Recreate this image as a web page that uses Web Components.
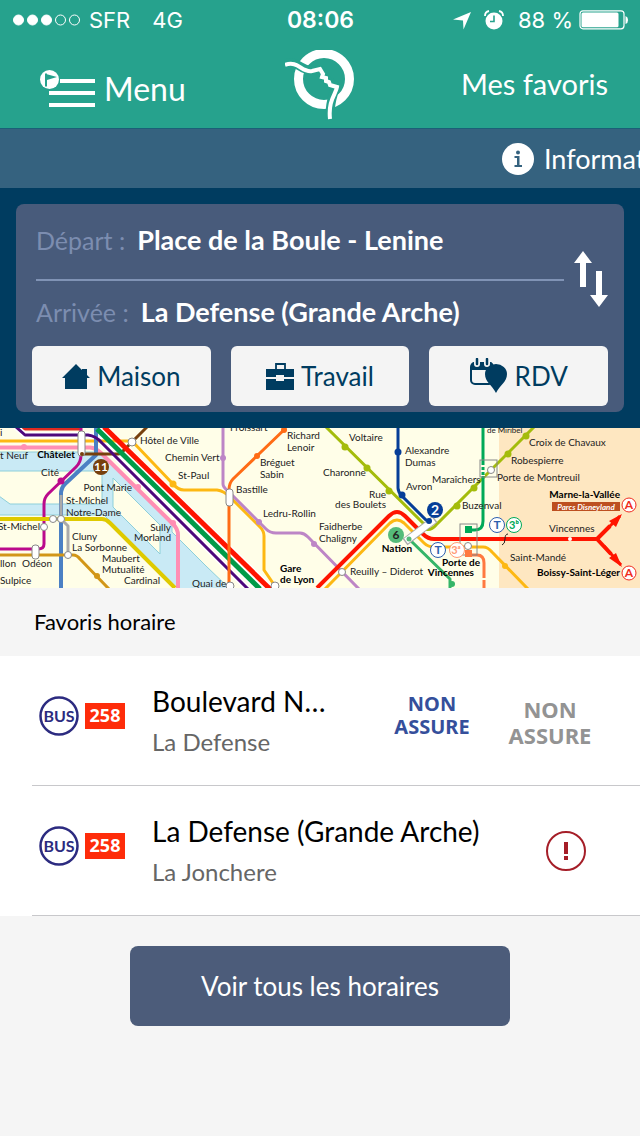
<!DOCTYPE html>
<html lang="fr">
<head>
<meta charset="utf-8">
<meta name="viewport" content="width=device-width, initial-scale=1">
<title>Mes favoris</title>
<style>
  html, body { margin: 0; min-height: 100%; }
  body { background: #f5f5f5; font-family: Lato, "Open Sans", sans-serif; color: #000; overflow-x: hidden; }
</style>
</head>
<body>
<ratp-app></ratp-app>

<template id="ratp-app">
  <style>:host { display: block; } header { display: block; background: #26a28d; border-bottom: 1px solid #1b5f78; }</style>
  <header><status-bar></status-bar><nav-bar></nav-bar></header>
  <info-ticker>Informat</info-ticker>
  <trip-form></trip-form>
  <metro-map></metro-map>
  <main>
    <favorite-list heading="Favoris horaire">
      <favorite-row line="258">Boulevard N…<span slot="to">La Defense</span>
        <time-note slot="times">NON<br>ASSURE</time-note>
        <time-note slot="times" later>NON<br>ASSURE</time-note>
      </favorite-row>
      <favorite-row line="258">La Defense (Grande Arche)<span slot="to">La Jonchere</span>
        <alert-icon slot="times"></alert-icon>
      </favorite-row>
    </favorite-list>
    <main-button>Voir tous les horaires</main-button>
  </main>
</template>

<template id="status-bar">
  <style>
    :host { display: grid; grid-template-columns: 1fr auto 1fr; align-items: center; height: 40px; padding: 0 11px 0 12px;
      color: #fff; font: 400 22px/40px Inter, sans-serif; white-space: nowrap; }
    div { display: flex; align-items: center; }
    .dots { margin-right: 8px; }
    .net { margin-left: 22px; }
    b { font-weight: 600; padding-right: 0; font-size: 23px; }
    .right { justify-content: flex-end; }
    .clock { margin: 0 14px 0 12px; }
    .bat { margin-left: 6px; }
    svg { display: block; }
  </style>
  <div>
    <svg class="dots" width="69" height="14" fill="#fff" stroke="#fff"><circle cx="6.500" cy="7" r="5"/><circle cx="20.500" cy="7" r="5"/><circle cx="34.500" cy="7" r="5"/><circle cx="48.500" cy="7" r="5" fill="none"/><circle cx="62.500" cy="7" r="5" fill="none"/></svg>
    <span>SFR</span><span class="net">4G</span>
  </div>
  <b>08:06</b>
  <div class="right">
    <svg width="19" height="19" fill="#fff"><path d="M18 1 10.500 18.500 10 9.500 0 8.500Z"/></svg>
    <svg class="clock" width="20" height="20"><circle cx="10" cy="11" r="8.500" fill="#fff"/><path d="M1 6a5 5 0 0 1 4-5M15 1a5 5 0 0 1 4 5" stroke="#fff" stroke-width="1.800" fill="none"/><path d="M10 5.500v6H6" stroke="#26a28d" stroke-width="1.600" fill="none"/></svg>
    <span>88 %</span>
    <svg class="bat" width="50" height="20"><rect x="1" y=".8" width="44" height="18" rx="3" fill="none" stroke="#fff" stroke-width="1.200"/><rect x="2.500" y="2.500" width="37" height="14.800" rx="1.500" fill="#fff"/><path d="M46.500 6q2.600 1 2.600 4t-2.600 4Z" fill="#fff"/></svg>
  </div>
</template>

<template id="nav-bar">
  <style>
    :host { display: grid; grid-template-columns: 1fr auto 1fr; height: 88px; padding: 0 32px; color: #fff; }
    button { display: flex; align-items: center; gap: 8px; justify-self: start; border: 0; padding: 10px 0 0 8px; background: none; color: inherit; font: 32px/40px Lato, sans-serif; }
    a { justify-self: end; color: inherit; text-decoration: none; font-size: 29px; line-height: 88px; }
    .logo { padding: 10px 0 0; }
    svg { display: block; }
  </style>
  <button type="button"><svg width="56" height="38"><path d="M20 11h35M9 23h46M9 35h46" stroke="#fff" stroke-width="4"/><circle cx="9.500" cy="9.500" r="9.500" fill="#fff"/><path d="M6 3.500v13" stroke="#26a28d" stroke-width="2"/><path d="M6 4l11 3L7 10" fill="#26a28d"/></svg><span>Menu</span></button>
  <svg class="logo" width="70" height="72" viewBox="0 0 70 72" role="img" aria-label="RATP">
    <circle cx="39" cy="29" r="25.500" fill="none" stroke="#fff" stroke-width="9"/>
    <path d="M0 14c13-5 16 8 28 6l8 1 2 6 12 9c1 4-6 13-5 34" fill="none" stroke="#26a28d" stroke-width="9"/>
    <path d="M0 15c13-5 17 8 27 6l8-2 3 5-1 3 4 1v3l3 1 1 3 7 2c-1 7-9 13-7 32" fill="none" stroke="#fff" stroke-width="4"/>
  </svg>
  <a href="#favoris">Mes favoris</a>
</template>

<template id="info-ticker">
  <style>
    :host { display: flex; justify-content: flex-end; align-items: center; gap: 10px; height: 59px; overflow: hidden; background: #35627f; color: #fff; font-size: 27px; white-space: nowrap; }
    svg { flex: none; }
    span { width: 96px; }
  </style>
  <svg width="32" height="32"><circle cx="16" cy="16" r="16" fill="#fff"/><g fill="#35627f"><circle cx="16" cy="9.500" r="2"/><path d="M12.500 13h5v9H20v2h-7.500v-2H15v-7h-2.500Z"/></g></svg>
  <span><slot></slot></span>
</template>

<template id="trip-form">
  <style>
    :host { display: block; padding: 16px; background: #003c60; }
    form { display: block; margin: 0; padding: 0 16px 6px; border-radius: 8px; background: #485b7b; }
    .top { display: grid; grid-template-columns: 1fr auto; align-items: center; padding: 0 0 0 4px; gap: 10px; }
    .field { display: flex; align-items: center; gap: 12px; height: 61px; padding-bottom: 4px; }
    .field:first-child { height: 71px; border-bottom: 2px solid #8093b5; }
    label { color: #7c8db0; font-size: 25px; white-space: nowrap; }
    input { flex: 1; min-width: 0; border: 0; padding: 0; background: none; color: #fff; font: 700 27px/40px Lato, sans-serif; outline: 0; }
    .swap { border: 0; padding: 8px 0 0; background: none; }
    .places { display: flex; gap: 20px; }
    svg { display: block; }
  </style>
  <form>
    <div class="top">
      <div>
        <div class="field"><label for="from">Départ :</label><input id="from" value="Place de la Boule - Lenine"></div>
        <div class="field"><label for="to">Arrivée :</label><input id="to" value="La Defense (Grande Arche)"></div>
      </div>
      <button class="swap" type="button" aria-label="Inverser"><svg width="34" height="56" fill="#fff"><path d="M9 0 18 12H12V36H6V12H0ZM22 20h6V44h6L25 56 16 44h6Z"/></svg></button>
    </div>
    <div class="places">
      <place-button><svg slot="icon" width="28" height="25" fill="#003c60"><path d="M14 0 20 6V5h5v6l3 3H25V25H3V14H0Z"/></svg>Maison</place-button>
      <place-button><svg slot="icon" width="28" height="27" fill="#003c60"><path d="M0 6H28V14H18V12H10v2H0ZM0 16H10v2h8V16H28V27H0Z"/><path d="M10 6V1H19V6" fill="none" stroke="#003c60" stroke-width="1.800"/></svg>Travail</place-button>
      <place-button><svg slot="icon" width="38" height="36"><rect x="1" y="5" width="22" height="21" rx="4" fill="none" stroke="#003c60" stroke-width="2"/><path d="M1 12V8q0-4 4-4H20q3 0 3 4v4Z" fill="#003c60"/><path d="M7 2V6M17 2V6" stroke="#f4f4f4" stroke-width="6" stroke-linecap="round"/><path d="M7 1V6M17 1V6" stroke="#003c60" stroke-width="2.500" stroke-linecap="round"/><path d="M26 35C22 27 15 24 15 16a11 10 0 0 1 22 0C37 24 30 27 26 35Z" fill="#003c60"/></svg>RDV</place-button>
    </div>
  </form>
</template>

<template id="place-button">
  <style>
    :host { display: block; flex: 1; }
    button { display: flex; width: 100%; height: 60px; align-items: center; justify-content: center; gap: 7px; border: 0; border-radius: 6px; padding: 0; background: #f4f4f4; color: #003c60; font: 26px/60px Lato, sans-serif; }
    ::slotted(svg) { display: block; }
  </style>
  <button type="button"><slot name="icon"></slot><span><slot></slot></span></button>
</template>

<template id="metro-map">
  <style>
    :host { display: block; background: #fffee8; }
    svg { display: block; width: 100%; height: auto; font: 10px Lato, sans-serif; fill: #222; }
    .l { fill: none; stroke-width: 3; stroke-linejoin: round; }
    .w { stroke: #fff; }
    .b { font-weight: 700; fill: #000; }
    .e { text-anchor: end; }
    .m { text-anchor: middle; }
    .s { fill: #fff; stroke: #888; }
  </style>
  <svg viewBox="0 0 640 160" role="img" aria-label="Plan du métro">
    <rect width="640" height="160" fill="#fffee8"/><rect x="499" width="141" height="160" fill="#fee7c1"/>
    <g fill="#c9eaf5" stroke="#8dcfda"><path d="M-1 24H100L172 96V104L206 138 230 161H178L104 87H-1V68L10 76H102V43H-1Z"/><path d="M113 50 160 97V126L113 79Z" fill="#fffee8"/></g>
    <g class="l">
      <path d="M22 1H80" stroke="#e02a20"/>
      <path d="M16-1 25 7H88Q96 8 102 15L248 161" stroke="#fff" stroke-width="6"/>
      <path d="M97 1 260 161M103-1 270 161" stroke="#fff" stroke-width="8"/>
      <path d="M0 13H132L173 56Q178 62 184 62H217Q224 63 230 69L260 99Q264 103 264 108V142L275 158" stroke="#fdb813" />
      <path d="M0 19.500H90Q96 20 101 25L173 96Q178 101 178 107V160" stroke="#ff8fb4" stroke-width="4"/>
      <path d="M96 0V27L65 56Q61 60 61 66V160" stroke="#4b80c4" stroke-width="4"/>
      <path d="M81 0V27Q81 34 76 39L48 66Q44 70 44 76V116Q44 121 38 121H0" stroke="#bb0a8c"/>
      <path d="M0 91H102Q106 91 110 95L175 160" stroke="#dfca00" stroke-width="4"/>
      <path d="M0 127H73Q77 127 80 131L109 161" stroke="#d29617"/>
      <path d="M82 26H118Q121 26 124 22L147-1" stroke="#77400d"/>
      <path d="M16-1 25 7H88Q96 8 102 15L248 161" stroke="#4d087c"/>
      <path d="M97 1 260 161" stroke="#009b48" stroke-width="5"/>
      <path d="M104-1 270 161" stroke="#ff1400" stroke-width="5"/>
      <path d="M223 0V56Q223 59 228 63L266 101Q270 105 276 105H300Q304 105 308 109L359 161" stroke="#bd85c6"/>
      <path d="M286 0 233 51Q229 55 229 62V160" stroke="#ff6c15"/>
      <path d="M326-1 424 96M534-1 436 97Q431 103 425 101" stroke="#a4bc0b"/>
      <path d="M398 0V60Q398 64 402 68L431 97" stroke="#063e98"/>
      <path d="M325 161 390 95Q397 89 404 95L424 115Q428 119 434 119H483Q488 119 492 124L528 161" stroke="#fdb813"/>
      <path d="M317 160 389 88Q397 80 405 88L423 106Q428 111 434 111H597L610 98M597 111 611 126" stroke="#ff1400" stroke-width="4"/>
      <path d="M604 104 620 88M604 118 621 137" stroke="#ff1400" stroke-width="3"/>
      <path d="M609 93 622 86 616 99ZM609 130 622 139 616 125Z" fill="#ff1400" stroke="none"/>
      <path d="M409 111 450 151V160" stroke="#35b568"/>
      <path d="M483 0V93Q483 102 475 102H468" stroke="#00a958"/>
      <path d="M468 127H477Q484 127 484 135V160" stroke="#ff7940"/>
      <path d="M483 37V48M484 150V153" stroke="#fffee8" stroke-width="4" stroke-dasharray="2 3"/>
      <path d="M61 67V91M53 91H61L68 98V127" stroke="#aaa" stroke-width="3"/>
      <path d="M405 114 435 91" stroke="#aaa" stroke-width="8"/><path d="M406 113 434 92" class="w" stroke-width="6"/>
    </g>
    <g><circle cx="61" cy="53" r="3.500" fill="#bb0a8c"/><circle cx="97" cy="148" r="3" fill="#d29617"/><circle cx="173" cy="56" r="3.500" fill="#fdb813"/><g fill="#ff8fb4"><circle cx="24" cy="19" r="3"/><circle cx="138" cy="59" r="3"/><circle cx="173" cy="95" r="3"/></g><g fill="#bd85c6"><circle cx="223" cy="30" r="3"/><circle cx="259" cy="94" r="3"/><circle cx="314" cy="116" r="3"/></g><g fill="#ff6c15"><circle cx="284" cy="2" r="3"/><circle cx="257" cy="28" r="3"/></g><g fill="#a4bc0b"><circle cx="345" cy="19" r="3.500"/><circle cx="367" cy="40" r="3.500"/><circle cx="389" cy="63" r="3.500"/><circle cx="457" cy="78" r="3.500"/><circle cx="474" cy="60" r="3.500"/><circle cx="508" cy="26" r="3.500"/><circle cx="526" cy="8" r="3.500"/></g><g fill="#063e98"><circle cx="398" cy="24" r="3.500"/><circle cx="402" cy="67" r="3.500"/><circle cx="429" cy="93" r="3"/></g><circle cx="409" cy="111" r="2.500" fill="#55bb79"/><circle cx="505" cy="138" r="3" fill="#fdb813"/><circle cx="452" cy="156" r="3" fill="#35b568"/><circle cx="82" cy="26" r="2" fill="#77400d"/></g>
    <g class="s"><rect x="78" y="3" width="7" height="25" rx="3"/><rect x="32" y="117" width="7" height="14" rx="3"/><rect x="226" y="61" width="7" height="17" rx="3"/><circle cx="132" cy="14" r="4"/><circle cx="44" cy="99" r="3.500"/><circle cx="53" cy="91" r="3.500"/><circle cx="61" cy="91" r="3.500"/><circle cx="68" cy="127" r="3.500"/><circle cx="342" cy="144" r="3.500"/><circle cx="230" cy="158" r="4"/><circle cx="275" cy="158" r="4"/></g>
    <circle cx="82" cy="26" r="2" fill="#77400d"/>
    <g fill="none" stroke="#888"><rect x="480" y="32" width="17" height="17"/><rect x="460" y="96" width="17" height="31"/><circle cx="491" cy="42" r="3.500" fill="#fff"/><circle cx="468" cy="118" r="3.500" fill="#fff"/></g>
    <path d="M465 98h7v7h-7Z" fill="#00a958"/><path d="M465 122h7v7h-7Z" fill="#ff7940"/><circle cx="570" cy="111" r="2" fill="#fff"/><path d="M508 106q-3 0-3 5t-3 6" stroke="#222" fill="none"/>
    <circle cx="101" cy="39" r="8" fill="#77400d"/><circle cx="396" cy="107" r="8" fill="#55bb79"/><circle cx="435" cy="82" r="8" fill="#063e98"/>
    <g fill="#fff" stroke="#2d5fae"><circle cx="438" cy="122" r="7.500"/><circle cx="497" cy="97" r="7.500"/><circle cx="457" cy="122" r="7.500" stroke="#ff9a75"/><circle cx="514" cy="97" r="7.500" stroke="#00a958"/><g stroke="#f02d20"><circle cx="629" cy="77" r="7"/><circle cx="629" cy="145" r="7"/></g></g>
    <g class="m" font-weight="700" font-size="12"><text x="101" y="43" fill="#fff">11</text><text x="396" y="111">6</text><text x="435" y="87" fill="#fff" font-size="14">2</text><g fill="#2d5fae"><text x="438" y="126">T</text><text x="497" y="101">T</text></g><text x="456" y="126" fill="#ff9a75" font-size="11">3ᵃ</text><text x="514" y="101" fill="#00a958" font-size="11">3ᵇ</text><g fill="#f02d20"><text x="629" y="81">A</text><text x="629" y="149">A</text></g></g>
    <text x="0" y="31">t Neuf</text><text x="0" y="8">i</text><text class="b e" x="75" y="30">Châtelet</text><text x="140" y="16">Hôtel de Ville</text><text x="165" y="33">Chemin Vert</text><text x="178" y="51">St-Paul</text>
    <text class="e" x="59" y="48">Cité</text><text class="e" x="132" y="63">Pont Marie</text><text x="66" y="76">St-Michel</text><text x="66" y="88">Notre-Dame</text><text class="e" x="40" y="102">St-Michel</text><text x="72" y="112">Cluny</text><text x="72" y="123">La Sorbonne</text><text x="0" y="139">llon</text><text x="22" y="139">Odéon</text><text x="0" y="156">Sulpice</text><text x="102" y="134">Maubert</text><text x="102" y="145">Mutualité</text><text x="124" y="156">Cardinal</text><text class="e" x="171" y="103">Sully</text><text class="e" x="171" y="113">Morland</text><text x="192" y="159">Quai de</text>
    <text x="230" y="3">Froissart</text><text x="287" y="11">Richard</text><text x="287" y="23">Lenoir</text><text x="260" y="38">Bréguet</text><text x="260" y="50">Sabin</text><text x="236" y="65">Bastille</text><text x="263" y="89">Ledru-Rollin</text><text x="349" y="13">Voltaire</text><text x="323" y="48">Charonne</text><text class="e" x="386" y="70">Rue</text><text class="e" x="386" y="80">des Boulets</text><text x="319" y="102">Faidherbe</text><text x="319" y="114">Chaligny</text><text class="b" x="280" y="144">Gare</text><text class="b" x="280" y="155">de Lyon</text><text x="350" y="147">Reuilly – Diderot</text><text class="b m" x="397" y="124">Nation</text>
    <text x="405" y="26">Alexandre</text><text x="405" y="38">Dumas</text><text x="406" y="62">Avron</text><text x="432" y="55">Maraîchers</text><text x="462" y="81">Buzenval</text><text x="487" y="5" font-size="8">de Miribel</text><text x="529" y="18">Croix de Chavaux</text><text x="511" y="36">Robespierre</text><text x="497" y="53">Porte de Montreuil</text><text class="b e" x="620" y="70">Marne-la-Vallée</text><rect x="552" y="74" width="68" height="9" fill="#bd4f20"/><text class="m" x="586" y="82" fill="#fff" font-size="8" font-weight="700" font-style="italic">Parcs Disneyland</text><text x="549" y="104">Vincennes</text><text x="510" y="133">Saint-Mandé</text><text class="b e" x="620" y="148">Boissy-Saint-Léger</text><text class="b e" x="480" y="138">Porte de</text><text class="b e" x="474" y="148">Vincennes</text>
  </svg>
</template>

<template id="favorite-list">
  <style>
    :host { display: block; }
    h2 { margin: 0; padding: 0 34px; font-size: 22px; font-weight: 400; line-height: 68px; }
    .rows { background: #fff; }
  </style>
  <h2></h2><div class="rows"><slot></slot></div>
</template>

<template id="favorite-row">
  <style>
    :host { display: flex; align-items: stretch; height: 129px; margin-left: 32px; border-bottom: 1px solid #c8c8cb; background: #fff; }
    .line { flex: none; width: 120px; padding: 36px 0 0 4px; box-sizing: border-box; }
    .text { flex: 1; min-width: 0; padding-top: 24px; white-space: nowrap; }
    h3 { margin: 0; font-size: 28px; font-weight: 400; line-height: 42px; }
    p { margin: 0; color: #666; font-size: 24px; line-height: 40px; }
    .times { display: flex; align-items: flex-start; justify-content: flex-end; padding-right: 44px; gap: 26px; }
    svg { display: block; }
    text { font: 700 18px "Noto Sans", sans-serif; text-anchor: middle; }
    .bus { font: 700 16px Lato, sans-serif; }
  </style>
  <div class="line"><svg width="92" height="48"><circle cx="23" cy="24" r="18.500" fill="none" stroke="#2c2b80" stroke-width="2.500"/><text class="bus" x="23" y="30" fill="#2c2b80">BUS</text><rect x="49" y="11" width="40" height="26" fill="#fe2c0a"/><text class="n" x="69" y="30" fill="#fff"></text></svg></div>
  <div class="text"><h3><slot></slot></h3><p><slot name="to"></slot></p></div>
  <div class="times"><slot name="times"></slot></div>
</template>

<template id="time-note">
  <style>
    :host { display: block; padding-top: 36px; min-width: 92px; text-align: center; color: #354f9b; font: 700 20px/23px "Noto Sans", sans-serif; }
    :host([later]) { padding-top: 40px; color: #939393; font-size: 22px; line-height: 26px; }
  </style>
  <slot></slot>
</template>

<template id="alert-icon">
  <style>:host { display: block; padding: 45px 10px 0 0; } svg { display: block; }</style>
  <svg width="40" height="40" role="img" aria-label="Alerte"><circle cx="20" cy="20" r="19" fill="none" stroke="#a51e28" stroke-width="2"/><path d="M18 11h4v12h-4ZM18 25h4v4h-4Z" fill="#a51e28"/></svg>
</template>

<template id="main-button">
  <style>
    :host { display: flex; justify-content: center; padding: 30px 16px 110px; }
    button { width: 380px; max-width: 100%; height: 80px; border: 0; border-radius: 8px; background: #4c5c7a; color: #fff; font: 26px/80px Lato, sans-serif; padding: 0; }
  </style>
  <button type="button"><slot></slot></button>
</template>

<script>
  class TemplateElement extends HTMLElement {
    constructor() {
      super();
      this.attachShadow({ mode: "open" }).append(document.getElementById(this.localName).content.cloneNode(true));
    }
  }
  class FavoriteRow extends TemplateElement {
    connectedCallback() { this.shadowRoot.querySelector(".n").textContent = this.getAttribute("line"); }
  }
  class FavoriteList extends TemplateElement {
    connectedCallback() { this.shadowRoot.querySelector("h2").textContent = this.getAttribute("heading"); }
  }
  customElements.define("favorite-row", FavoriteRow);
  customElements.define("favorite-list", FavoriteList);
  for (const name of ["status-bar", "nav-bar", "info-ticker", "place-button", "trip-form", "metro-map", "time-note", "alert-icon", "main-button", "ratp-app"])
    customElements.define(name, class extends TemplateElement {});
</script>
</body>
</html>
